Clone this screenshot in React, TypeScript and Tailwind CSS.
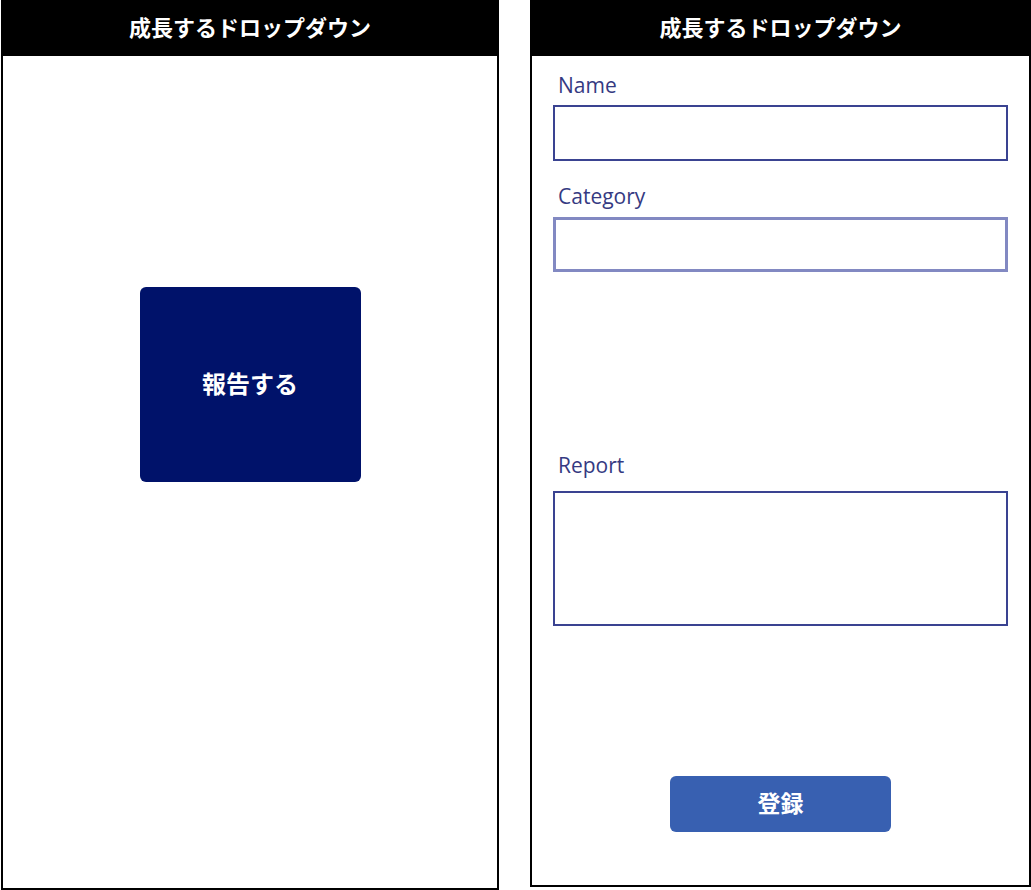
import React from "react";

const jp = "font-['Noto_Sans_CJK_JP','Noto_Sans',sans-serif]";

function Header() {
  return (
    <div className={`h-[54px] shrink-0 bg-black flex items-center justify-center pb-[6px] text-white text-[22px] leading-none font-bold ${jp}`}>
      成長するドロップダウン
    </div>
  );
}

function Label({ children, className = "" }: { children: React.ReactNode; className?: string }) {
  return (
    <div className={`pl-[26px] text-[21px] leading-[27px] text-[#353a82] font-['Open_Sans',sans-serif] ${className}`}>
      {children}
    </div>
  );
}

export default function App() {
  return (
    <div className="w-[1031px] h-[890px] bg-white flex items-start">
      <div className="ml-[1px] w-[498px] h-[890px] border-2 border-black flex flex-col">
        <Header />
        <div className="flex-1 flex flex-col items-center">
          <button
            className={`mt-[231px] w-[221px] h-[195px] rounded-[6px] bg-[#00126a] pb-[4px] text-white text-[24px] leading-none font-bold ${jp} flex items-center justify-center`}
          >
            報告する
          </button>
        </div>
      </div>

      <div className="ml-[31px] w-[501px] h-[887px] border-2 border-black flex flex-col">
        <Header />
        <div className="flex-1 flex flex-col">
          <Label className="mt-[16px]">Name</Label>
          <div className="mt-[6px] ml-[21px] w-[455px] h-[56px] border-2 border-[#3a4391] bg-white" />
          <Label className="mt-[22px]">Category</Label>
          <div className="mt-[7px] ml-[21px] w-[455px] h-[55px] border-[3px] border-[#8289c2] bg-white" />
          <Label className="mt-[180px]">Report</Label>
          <div className="mt-[12px] ml-[21px] w-[455px] h-[135px] border-2 border-[#3a4391] bg-white" />
          <div className="flex justify-center">
            <button
              className={`mt-[150px] w-[221px] h-[56px] rounded-[6px] bg-[#3860b1] pb-[3px] text-white text-[23px] leading-none font-bold ${jp} flex items-center justify-center`}
            >
              登録
            </button>
          </div>
        </div>
      </div>
    </div>
  );
}
